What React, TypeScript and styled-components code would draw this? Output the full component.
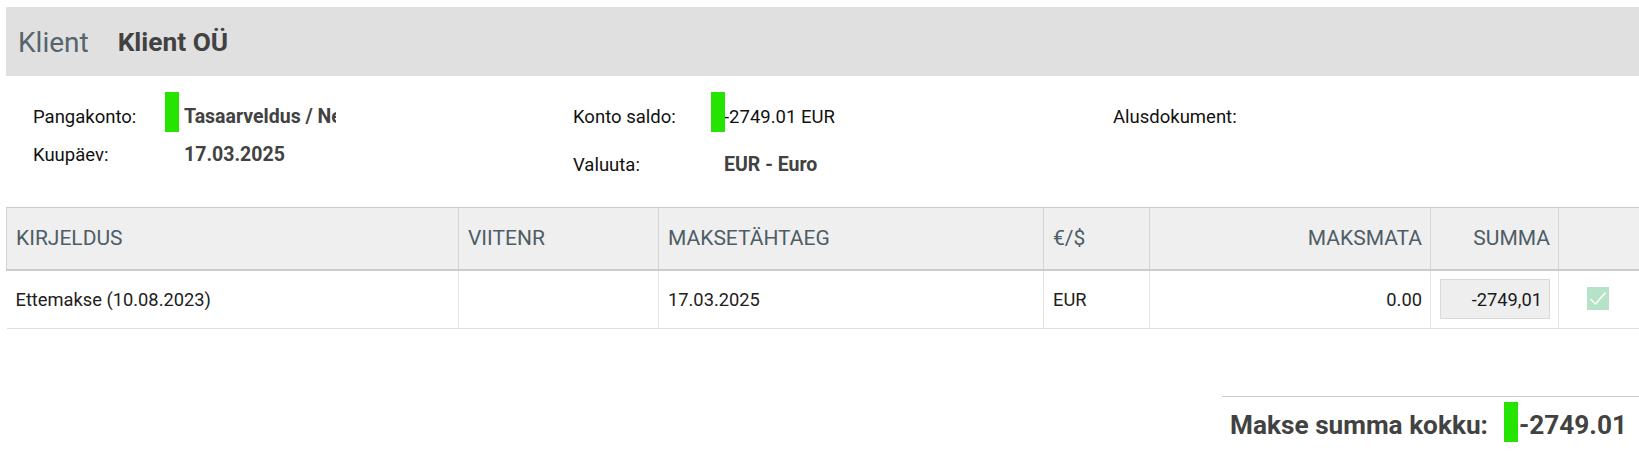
import React from "react";
import styled, { createGlobalStyle } from "styled-components";

const GlobalStyle = createGlobalStyle`
  html, body { margin: 0; padding: 0; background: #ffffff; }
  body { font-family: Roboto, "Liberation Sans", Arial, sans-serif; color: #212121; }
  * { box-sizing: border-box; }
`;

const Page = styled.div`
  padding: 7px 0 0 6px;
  width: 1639px;
`;

const TitleBar = styled.div`
  height: 69px;
  background: #e0e0e0;
  display: flex;
  align-items: center;
  padding: 1px 0 0 12px;
  gap: 29px;
`;

const TitleLabel = styled.span`
  font-size: 28px;
  color: #56646c;
  font-weight: 400;
`;

const TitleName = styled.span`
  font-size: 26.3px;
  color: #424242;
  font-weight: 700;
`;

const InfoGrid = styled.div`
  display: grid;
  grid-template-columns: 540px 540px 400px;
  padding: 21px 0 24px 27px;
  align-items: start;
`;

const InfoColumn = styled.div<{ $gap: number }>`
  display: flex;
  flex-direction: column;
  gap: ${(p) => p.$gap}px;
`;

const Field = styled.div`
  display: flex;
  align-items: center;
  height: 38px;
  font-size: 18.5px;
  padding-top: 1px;
`;

const Label = styled.span`
  width: 151px;
  flex: none;
  color: #111;
`;

const Value = styled.span<{ $bold?: boolean }>`
  position: relative;
  font-weight: ${(p) => (p.$bold ? 700 : 400)};
  font-size: ${(p) => (p.$bold ? "19.5px" : "18.5px")};
  color: ${(p) => (p.$bold ? "#424242" : "#111")};
  white-space: nowrap;
`;

const Clip = styled.span<{ $width: number }>`
  display: inline-block;
  max-width: ${(p) => p.$width}px;
  overflow: hidden;
  vertical-align: bottom;
`;

const Marker = styled.span<{ $left: number; $shift: number }>`
  position: absolute;
  left: ${(p) => p.$left}px;
  top: calc(50% - ${(p) => 20 + p.$shift}px);
  width: 14px;
  height: 40px;
  background: #24e400;
`;

const Table = styled.table`
  width: 1633px;
  border-collapse: collapse;
  table-layout: fixed;
`;

const HeadCell = styled.th<{ $right?: boolean }>`
  height: 62px;
  background: #efefef;
  border-top: 1px solid #cccccc;
  border-bottom: 2px solid #cccccc;
  border-left: 1px solid #d4d4d4;
  padding: 0 8px 0 9px;
  text-align: ${(p) => (p.$right ? "right" : "left")};
  font-weight: 400;
  font-size: 21px;
  color: #4e5d66;
  text-transform: uppercase;
`;

const BodyCell = styled.td<{ $right?: boolean; $first?: boolean }>`
  height: 59px;
  border-bottom: 1px solid #e0e0e0;
  border-left: ${(p) => (p.$first ? "none" : "1px solid #e4e4e4")};
  padding: 0 8px 0 9px;
  text-align: ${(p) => (p.$right ? "right" : "left")};
  font-size: 18.3px;
  color: #212121;
`;

const AmountInput = styled.div`
  height: 40px;
  background: #eeeeee;
  border: 1px solid #d9d9d9;
  display: flex;
  align-items: center;
  justify-content: flex-end;
  padding-right: 7px;
  font-size: 18.3px;
  color: #1a1a1a;
`;

const CheckBox = styled.span`
  display: inline-flex;
  width: 22px;
  height: 23px;
  margin: -3px 0 0 19px;
  background: #b6e3c8;
  align-items: center;
  justify-content: center;
  vertical-align: middle;
`;

const TotalRow = styled.div`
  margin: 67px 0 0 auto;
  width: 417px;
  border-top: 1px solid #cccccc;
  display: flex;
  justify-content: flex-end;
  align-items: center;
  gap: 31px;
  height: 56px;
  padding-right: 12px;
  font-size: 26.2px;
  font-weight: 700;
  color: #424242;
`;

const TotalValue = styled.span`
  position: relative;
  white-space: nowrap;
`;

const columns = [452, 200, 385, 106, 281, 128, 81];

export default function App() {
  return (
    <>
      <GlobalStyle />
      <Page>
        <TitleBar>
          <TitleLabel>Klient</TitleLabel>
          <TitleName>Klient OÜ</TitleName>
        </TitleBar>

        <InfoGrid>
          <InfoColumn $gap={0}>
            <Field>
              <Label>Pangakonto:</Label>
              <Value $bold>
                <Marker $left={-19} $shift={5} />
                <Clip $width={152}>Tasaarveldus / Netting</Clip>
              </Value>
            </Field>
            <Field>
              <Label>Kuupäev:</Label>
              <Value $bold>17.03.2025</Value>
            </Field>
          </InfoColumn>
          <InfoColumn $gap={10}>
            <Field>
              <Label>Konto saldo:</Label>
              <Value>
                <Marker $left={-13} $shift={5} />
                -2749.01 EUR
              </Value>
            </Field>
            <Field>
              <Label>Valuuta:</Label>
              <Value $bold>EUR - Euro</Value>
            </Field>
          </InfoColumn>
          <InfoColumn $gap={0}>
            <Field>
              <Label>Alusdokument:</Label>
            </Field>
          </InfoColumn>
        </InfoGrid>

        <Table>
          <colgroup>
            {columns.map((w, i) => (
              <col key={i} style={{ width: w }} />
            ))}
          </colgroup>
          <thead>
            <tr>
              <HeadCell>Kirjeldus</HeadCell>
              <HeadCell>Viitenr</HeadCell>
              <HeadCell>Maksetähtaeg</HeadCell>
              <HeadCell>€/$</HeadCell>
              <HeadCell $right>Maksmata</HeadCell>
              <HeadCell $right>Summa</HeadCell>
              <HeadCell />
            </tr>
          </thead>
          <tbody>
            <tr>
              <BodyCell $first>Ettemakse (10.08.2023)</BodyCell>
              <BodyCell />
              <BodyCell>17.03.2025</BodyCell>
              <BodyCell>EUR</BodyCell>
              <BodyCell $right>0.00</BodyCell>
              <BodyCell>
                <AmountInput>-2749,01</AmountInput>
              </BodyCell>
              <BodyCell>
                <CheckBox>
                  <svg width="22" height="23" viewBox="0 0 22 23">
                    <path d="M3.5 12 L8.5 17 L18.5 5.5" fill="none" stroke="#ffffff" strokeWidth="1.5" />
                  </svg>
                </CheckBox>
              </BodyCell>
            </tr>
          </tbody>
        </Table>

        <TotalRow>
          <span>Makse summa kokku:</span>
          <TotalValue>
            <Marker $left={-15} $shift={3} />
            -2749.01
          </TotalValue>
        </TotalRow>
      </Page>
    </>
  );
}
